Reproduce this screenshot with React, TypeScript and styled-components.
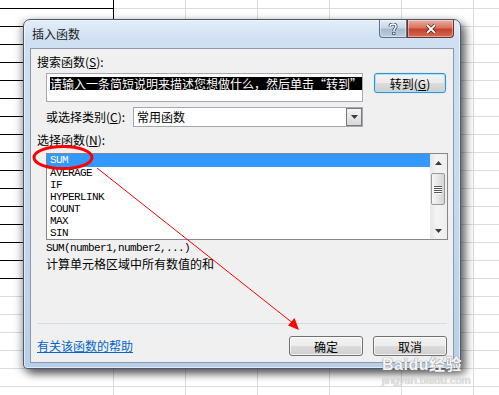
import React from "react";
import styled, { createGlobalStyle } from "styled-components";

const cjk = `"Noto Sans CJK SC", "Liberation Sans", sans-serif`;
const mono = `"Liberation Mono", "DejaVu Sans Mono", monospace`;

const GlobalStyle = createGlobalStyle`
  html, body { margin: 0; padding: 0; }
  body { width: 499px; height: 395px; overflow: hidden; font-family: ${cjk}; font-size: 12px; color: #000; }
`;

const functions = ["SUM", "AVERAGE", "IF", "HYPERLINK", "COUNT", "MAX", "SIN"];

const Sheet = styled.div`
  position: relative;
  width: 499px;
  height: 395px;
  overflow: hidden;
  box-sizing: border-box;
  padding: 19px 0 0 23px;
  background-color: #fff;
  background-image:
    linear-gradient(#000, #000),
    repeating-linear-gradient(to bottom, transparent 0 8px, #000 8px 9px, transparent 9px 18px),
    repeating-linear-gradient(to right, #dadcdd 0 1px, transparent 1px 72px),
    repeating-linear-gradient(to bottom, transparent 0 8px, #dadcdd 8px 9px, transparent 9px 18px);
  background-size: 1px 280px, 113px 280px, 386px 395px, 499px 395px;
  background-position: 113px 0, 0 0, 113px 0, 0 0;
  background-repeat: no-repeat;
`;

const Dialog = styled.div`
  width: 438px;
  height: 350px;
  box-sizing: border-box;
  border: 1px solid #4b5a6c;
  border-radius: 7px 7px 4px 4px;
  padding: 0 6px 5px 6px;
  display: flex;
  flex-direction: column;
  background: linear-gradient(to bottom, #e3edf8 0, #cfe0f3 20px, #c3d8ef 60%, #b6cfea 100%);
  box-shadow: inset 0 0 0 1px rgba(255, 255, 255, 0.55), 5px 5px 9px rgba(0, 0, 0, 0.55),
    -2px 2px 8px rgba(0, 0, 0, 0.3);
`;

const TitleBar = styled.div`
  height: 28px;
  display: flex;
  align-items: flex-start;
`;

const TitleText = styled.span`
  margin: 7px 0 0 2px;
  line-height: 14px;
  font-size: 12px;
  color: #1b1b1b;
`;

const CaptionButton = styled.div<{ $close?: boolean }>`
  width: ${(p) => (p.$close ? 47 : 28)}px;
  height: 18px;
  box-sizing: border-box;
  display: flex;
  align-items: center;
  justify-content: center;
  margin-left: ${(p) => (p.$close ? 0 : "auto")};
  border: 1px solid ${(p) => (p.$close ? "#6d3229" : "#5f6f83")};
  border-top: none;
  border-radius: ${(p) => (p.$close ? "0 0 4px 0" : "0 0 0 4px")};
  background: ${(p) =>
    p.$close
      ? "linear-gradient(to bottom, #eab0a2 0, #d8735f 45%, #c4432e 55%, #d26a4e 100%)"
      : "linear-gradient(to bottom, #e6eef7 0, #c9d6e6 45%, #a8bbd2 55%, #bccde0 100%)"};
  box-shadow: inset 0 0 0 1px rgba(255, 255, 255, 0.4);
`;

const Client = styled.div`
  flex: 1;
  background: #f0f0f0;
  border: 1px solid #8d99a8;
  padding: 0 6px;
  display: flex;
  flex-direction: column;
`;

const Label = styled.div<{ $top: number; $indent?: number }>`
  margin-top: ${(p) => p.$top}px;
  margin-left: ${(p) => p.$indent ?? 0}px;
  line-height: 14px;
  height: 14px;
  white-space: nowrap;
`;

const Key = styled.span`
  text-decoration: underline;
`;

const Row = styled.div<{ $top: number }>`
  margin-top: ${(p) => p.$top}px;
  padding-left: 9px;
  display: flex;
  align-items: flex-start;
`;

const SearchBox = styled.div`
  width: 317px;
  height: 29px;
  box-sizing: border-box;
  border: 1px solid #a4a8b0;
  background: #fff;
  padding: 1px 0 0 3px;
  overflow: hidden;
  white-space: nowrap;
`;

const Highlight = styled.span`
  display: inline-block;
  background: #000;
  color: #fff;
  line-height: 13px;
  height: 13px;
`;

const PushButton = styled.div<{ $width: number; $default?: boolean }>`
  width: ${(p) => p.$width}px;
  height: 20px;
  box-sizing: border-box;
  border: 1px solid ${(p) => (p.$default ? "#3c8fd2" : "#707070")};
  border-radius: 3px;
  display: flex;
  align-items: center;
  justify-content: center;
  font-size: 12px;
  background: linear-gradient(to bottom, #f3f3f3 0, #ececec 48%, #dcdcdc 52%, #cfcfcf 100%);
  box-shadow: ${(p) =>
    p.$default ? "inset 0 0 0 1px #a6e4fb, 0 0 1px #5bb8ee" : "inset 0 0 0 1px rgba(255,255,255,0.7)"};
`;

const GoButton = styled(PushButton)`
  margin-left: 11px;
`;

const CategoryLabel = styled.span`
  width: 87px;
  line-height: 20px;
  white-space: nowrap;
`;

const Combo = styled.div`
  width: 230px;
  height: 20px;
  box-sizing: border-box;
  border: 1px solid #a4a8b0;
  background: #fff;
  display: flex;
  align-items: center;
`;

const ComboText = styled.span`
  flex: 1;
  padding-left: 3px;
  line-height: 18px;
`;

const ComboArrow = styled.div`
  width: 16px;
  height: 18px;
  box-sizing: border-box;
  border: 1px solid #7a7a7a;
  background: linear-gradient(to bottom, #f4f4f4, #d8d8d8);
  display: flex;
  align-items: center;
  justify-content: center;
`;

const ListBox = styled.div`
  margin: 6px 0 0 9px;
  width: 402px;
  height: 87px;
  box-sizing: border-box;
  border: 1px solid #828790;
  background: #fff;
  display: flex;
`;

const Items = styled.div`
  flex: 1;
  display: flex;
  flex-direction: column;
`;

const Item = styled.div<{ $selected?: boolean }>`
  height: 12px;
  line-height: 13px;
  padding-left: 3px;
  font-family: ${mono};
  font-size: 11px;
  letter-spacing: -0.6px;
  color: ${(p) => (p.$selected ? "#fff" : "#000")};
  background: ${(p) => (p.$selected ? "#3399ff" : "transparent")};
  &:first-child {
    height: 13px;
  }
`;

const ScrollBar = styled.div`
  width: 17px;
  display: flex;
  flex-direction: column;
  background: linear-gradient(to right, #e6e6e6, #f4f4f4 40%, #eeeeee);
`;

const ScrollArrow = styled.div`
  height: 17px;
  display: flex;
  align-items: center;
  justify-content: center;
`;

const Thumb = styled.div`
  margin: 2px 2px 0 1px;
  height: 32px;
  box-sizing: border-box;
  border: 1px solid #999;
  border-radius: 2px;
  background: linear-gradient(to right, #f6f6f6, #e6e6e6 50%, #d4d4d4);
  display: flex;
  flex-direction: column;
  align-items: center;
  justify-content: center;
  gap: 1px;
`;

const Grip = styled.div`
  width: 8px;
  height: 1px;
  background: #555;
  box-shadow: 0 1px 0 #fff;
`;

const Spacer = styled.div`
  flex: 1;
`;

const Signature = styled.div`
  margin: 2px 0 0 9px;
  height: 12px;
  line-height: 12px;
  font-family: ${mono};
  font-size: 11px;
  letter-spacing: -0.6px;
`;

const Separator = styled.div`
  margin-top: 52px;
  height: 1px;
  background: #d3dde6;
`;

const BottomRow = styled.div`
  margin-top: 12px;
  height: 20px;
  display: flex;
  align-items: center;
  gap: 10px;
`;

const HelpLink = styled.a`
  color: #0066cc;
  text-decoration: underline;
  margin-right: auto;
  line-height: 14px;
`;

const Overlay = styled.svg`
  position: absolute;
  left: 0;
  top: 0;
  pointer-events: none;
`;

const Watermark = styled.div`
  position: absolute;
  left: 382px;
  top: 357px;
  display: flex;
  flex-direction: column;
  align-items: flex-start;
  pointer-events: none;
`;

const WatermarkBrand = styled.div`
  font-family: "Liberation Sans", ${cjk};
  font-size: 16px;
  font-weight: bold;
  line-height: 15px;
  color: rgba(255, 255, 255, 0.92);
  text-shadow: 0 0 1px #8a8a8a, 0 0 1px #8a8a8a;
  letter-spacing: 0.5px;
`;

const WatermarkUrl = styled.div`
  font-family: "Liberation Sans", sans-serif;
  font-size: 11px;
  line-height: 13px;
  margin-top: 2px;
  color: #e6e6e6;
  text-shadow: 0 0 1px #9a9a9a;
`;

const Triangle = ({ down }: { down?: boolean }) => (
  <svg width="7" height="4" viewBox="0 0 7 4">
    <path d={down ? "M0 0h7L3.5 4z" : "M0 4h7L3.5 0z"} fill="#3b3b3b" />
  </svg>
);

export default function App() {
  return (
    <>
      <GlobalStyle />
      <Sheet>
        <Dialog>
          <TitleBar>
            <TitleText>插入函数</TitleText>
            <CaptionButton>
              <svg width="10" height="12" viewBox="0 0 10 12">
                <path
                  d="M2 3.5C2 1.8 3.3 1 5 1s3 .9 3 2.4c0 1.6-2 2-2 3.6V8"
                  fill="none"
                  stroke="#33404f"
                  strokeWidth="3"
                />
                <path
                  d="M2 3.5C2 1.8 3.3 1 5 1s3 .9 3 2.4c0 1.6-2 2-2 3.6V8"
                  fill="none"
                  stroke="#fff"
                  strokeWidth="1.5"
                />
                <rect x="4.3" y="9" width="3" height="3" fill="#33404f" />
                <rect x="5" y="9.6" width="1.6" height="1.7" fill="#fff" />
              </svg>
            </CaptionButton>
            <CaptionButton $close>
              <svg width="12" height="10" viewBox="0 0 12 10">
                <path d="M2 1l8 8M10 1L2 9" stroke="#4a1d16" strokeWidth="3.2" />
                <path d="M2 1l8 8M10 1L2 9" stroke="#fff" strokeWidth="1.8" />
              </svg>
            </CaptionButton>
          </TitleBar>
          <Client>
            <Label $top={6}>
              搜索函数(<Key>S</Key>):
            </Label>
            <Row $top={4}>
              <SearchBox>
                <Highlight>请输入一条简短说明来描述您想做什么，然后单击“转到”</Highlight>
              </SearchBox>
              <GoButton $width={72} $default>
                转到(<Key>G</Key>)
              </GoButton>
            </Row>
            <Row $top={5}>
              <CategoryLabel>
                或选择类别(<Key>C</Key>):
              </CategoryLabel>
              <Combo>
                <ComboText>常用函数</ComboText>
                <ComboArrow>
                  <Triangle down />
                </ComboArrow>
              </Combo>
            </Row>
            <Label $top={6}>
              选择函数(<Key>N</Key>):
            </Label>
            <ListBox>
              <Items>
                {functions.map((name, i) => (
                  <Item key={name} $selected={i === 0}>
                    {name}
                  </Item>
                ))}
              </Items>
              <ScrollBar>
                <ScrollArrow>
                  <Triangle />
                </ScrollArrow>
                <Thumb>
                  <Grip />
                  <Grip />
                  <Grip />
                  <Grip />
                </Thumb>
                <Spacer />
                <ScrollArrow>
                  <Triangle down />
                </ScrollArrow>
              </ScrollBar>
            </ListBox>
            <Signature>SUM(number1,number2,...)</Signature>
            <Label $top={3} $indent={9}>
              计算单元格区域中所有数值的和
            </Label>
            <Separator />
            <BottomRow>
              <HelpLink>有关该函数的帮助</HelpLink>
              <PushButton $width={74}>确定</PushButton>
              <PushButton $width={74}>取消</PushButton>
            </BottomRow>
          </Client>
        </Dialog>

        <Overlay width="499" height="395" viewBox="0 0 499 395">
          <ellipse cx="63" cy="157.5" rx="29" ry="11" fill="none" stroke="#ff0000" strokeWidth="3" />
          <line x1="97" y1="168" x2="294" y2="324" stroke="#ff0000" strokeWidth="1" />
          <path d="M299 330l-11-4.5 6.5-7.5z" fill="#ff0000" />
        </Overlay>

        <Watermark>
          <WatermarkBrand>Baidu经验</WatermarkBrand>
          <WatermarkUrl>jingyan.baidu.com</WatermarkUrl>
        </Watermark>
      </Sheet>
    </>
  );
}
